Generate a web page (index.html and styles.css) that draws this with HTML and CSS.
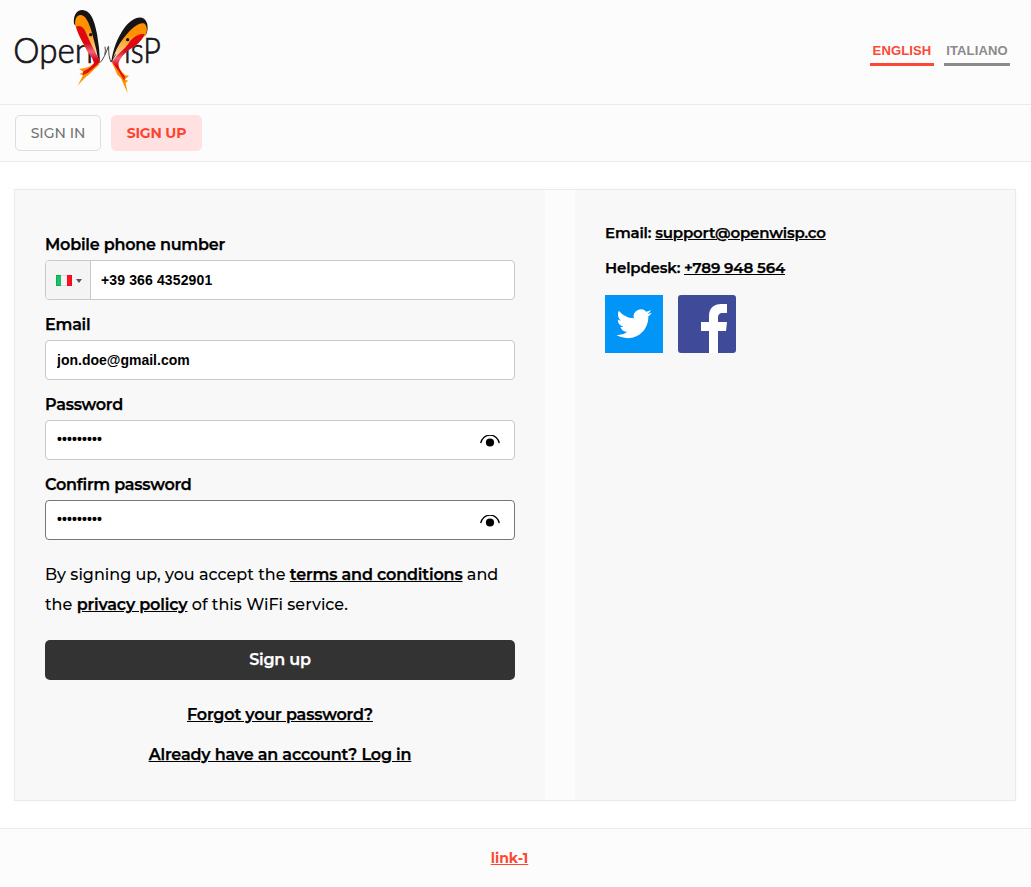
FILE: index.html
```html
<!DOCTYPE html>
<html lang="en">
<head>
<meta charset="utf-8">
<title>OpenWISP - Sign up</title>
<link rel="stylesheet" href="styles.css">
</head>
<body>
<header class="header">
  <a class="logo" href="#">
    <svg class="logo-mark" width="155" height="86" viewBox="36 27 465 258">
      <defs>
        <linearGradient id="wing" x1="0" y1="0" x2="0" y2="1"><stop offset=".3" stop-color="#ff9100"/><stop offset=".75" stop-color="#ffc680"/><stop offset="1" stop-color="#fff"/></linearGradient>
        <linearGradient id="red" x1="0" y1="0" x2="0" y2="1"><stop offset="0" stop-color="#e20a0a"/><stop offset=".35" stop-color="#d9061a"/><stop offset=".52" stop-color="#ed6680"/><stop offset=".68" stop-color="#dc0018"/><stop offset="1" stop-color="#e31912"/></linearGradient>
      </defs>
      <g class="logo-text">
        <text x="40" y="190" textLength="239" lengthAdjust="spacingAndGlyphs">Open</text>
        <text x="372" y="190" textLength="110" lengthAdjust="spacingAndGlyphs">isP</text>
      </g>
      <path d="M222 72C219 48 229 30 247 30C274 31 284 66 291 101Q299 145 300 188L295 184L276 167L232 82Z" fill="#171417"/>
      <path d="M226 78C223 56 231 44 243 45C261 47 272 82 279 110Q290 149 295 181L270 154Z" fill="url(#wing)"/>
      <path d="M228 80Q245 71 256 88L270 124Q279 146 300 184L297 194L266 224Q253 233 233 257L249 226L238 222L251 216L237 206Q264 207 282 190Q279 174 264 157L247 125Q233 99 228 80Z" fill="#ff9100"/>
      <path d="M228 80Q243 73 254 90L269 124Q279 146 300 184L292 194L264 218L248 226L250 214Q268 209 282 190Q279 174 264 157L247 125Q233 99 228 80Z" fill="url(#red)"/>
      <path d="M334 187C338 149 353 111 373 84C390 61 415 45 432 56C446 67 445 92 438 104L355 178Z" fill="#171417"/>
      <path d="M337 184Q345 145 374 110C396 82 420 64 434 71C443 80 442 97 436 106L352 176Z" fill="url(#wing)"/>
      <path d="M434 103C421 98 403 109 391 122Q380 142 353 164L335 186L352 224L363 235L383 280L377 248L385 242L374 239L387 227L376 226Q353 206 355 190Q361 169 385 150Q421 133 434 103Z" fill="#ff9100"/>
      <path d="M434 103C421 98 403 109 391 122Q380 142 353 164L336 186L357 215L373 243L375 230Q353 206 355 190Q361 169 385 150Q421 133 434 103Z" fill="url(#red)"/>
      <circle cx="272" cy="104" r="5" fill="#171417"/>
      <circle cx="383" cy="119" r="5" fill="#171417"/>
      <path d="M300 188Q313 175 325 139M326 139Q325 170 333 186L347 163M315 140Q318 155 314 163" fill="none" stroke="#29262a" stroke-width="2.5"/>
    </svg>
  </a>
  <div class="languages"><button class="lang lang-active">ENGLISH</button><button class="lang">ITALIANO</button></div>
</header>
<nav class="nav"><a class="nav-link" href="#">SIGN IN</a><a class="nav-link nav-active" href="#">SIGN UP</a></nav>
<main class="main">
  <div class="panel">
    <form class="form">
      <label class="label" for="phone">Mobile phone number</label>
      <div class="field">
        <div class="country"><svg width="16" height="11" viewBox="0 0 16 11"><path fill="#10ad49" d="M0 0h5v11H0z"/><path fill="#15c565" d="M1 1h4v9H1z"/><path fill="#ddd" d="M5 0h6v11H5z"/><path fill="#f3f3f3" d="M5 1h6v9H5z"/><path fill="#ed0c20" d="M11 0h5v11h-5z"/><path fill="#ff0d20" d="M11 1h4v9h-4z"/></svg><i class="caret"></i></div>
        <input class="input input-phone" id="phone" value="+39 366 4352901">
      </div>
      <label class="label" for="email">Email</label>
      <div class="field"><input class="input" id="email" value="jon.doe@gmail.com"></div>
      <label class="label" for="password">Password</label>
      <div class="field"><input class="input input-password" id="password" type="password" value="password1"><svg class="eye" width="20" height="14" viewBox="0 0 20 14"><path d="M.7 8.2A9.4 9.4 0 0 1 19.3 8.2" fill="none" stroke="#000" stroke-width="1.3"/><circle cx="10" cy="7.5" r="4.1"/></svg></div>
      <label class="label" for="confirm">Confirm password</label>
      <div class="field field-focus"><input class="input input-password" id="confirm" type="password" value="password1"><svg class="eye" width="20" height="14" viewBox="0 0 20 14"><path d="M.7 8.2A9.4 9.4 0 0 1 19.3 8.2" fill="none" stroke="#000" stroke-width="1.3"/><circle cx="10" cy="7.5" r="4.1"/></svg></div>
      <p class="terms">By signing up, you accept the <a href="#">terms and conditions</a> and<br>the <a href="#">privacy policy</a> of this WiFi service.</p>
      <button class="submit" type="button">Sign up</button>
      <p class="form-link"><a href="#">Forgot your password?</a></p>
      <p class="form-link"><a href="#">Already have an account? Log in</a></p>
    </form>
    <aside class="contact">
      <p class="contact-row">Email: <a href="#">support@openwisp.co</a></p>
      <p class="contact-row">Helpdesk: <a href="#">+789 948 564</a></p>
      <div class="social">
        <a href="#"><svg width="58" height="58" viewBox="0 0 58 58"><path fill="#0095f7" d="M0 0h58v58H0z"/><path transform="translate(11.4 11) scale(1.48)" fill="#fff" d="M23.95 4.57a10 10 0 0 1-2.82.78 5 5 0 0 0 2.16-2.73c-.95.56-2 .96-3.13 1.19a4.92 4.92 0 0 0-8.38 4.48C7.69 8.1 4.07 6.13 1.64 3.16a4.92 4.92 0 0 0 1.52 6.57 4.9 4.9 0 0 1-2.23-.61v.06a4.92 4.92 0 0 0 3.95 4.83 5 5 0 0 1-2.21.08 4.94 4.94 0 0 0 4.6 3.42A9.9 9.9 0 0 1 0 19.54a14 14 0 0 0 7.55 2.21c9.05 0 14-7.5 14-13.98l-.02-.63a10 10 0 0 0 2.42-2.57z"/></svg></a>
        <a href="#"><svg width="58" height="58" viewBox="0 0 58 58"><rect width="58" height="58" rx="3" fill="#3f4b99"/><path fill="#fff" d="M31 58V36h-8v-9h8v-6c0-8 5-12 12-12h6v9h-4c-4 0-5 2-5 5v4h9l-1 9h-8v22z"/></svg></a>
      </div>
    </aside>
  </div>
</main>
<footer class="footer"><a class="footer-link" href="#">link-1</a></footer>
</body>
</html>
```
FILE: styles.css
```css
* { box-sizing: border-box; }
body { margin: 0; background: #fff; color: #000; font: 500 16px/30px Montserrat, Inter, sans-serif; }
a { color: inherit; }
p { margin: 0; }
button, input { font-family: inherit; }
svg { display: block; flex: none; }
.header { height: 105px; padding: 9px 21px 0 12px; display: flex; justify-content: space-between; background: #fcfcfc; border-bottom: 1px solid #ebebeb; }
.logo-mark { overflow: visible; }
.logo-text { font-family: Lato, sans-serif; font-size: 108px; font-weight: 300; fill: #171417; stroke: #171417; stroke-width: 2.2px; }
.languages { display: flex; gap: 10px; height: 57px; align-items: flex-end; }
.lang { width: 66px; height: 30px; padding: 3px 0 0; border: 0; border-bottom: 3px solid #8b8b8b; background: none; color: #8b8b8b; font: 700 13px/24px "Liberation Sans", sans-serif; letter-spacing: .15px; white-space: nowrap; }
.lang-active { width: 64px; color: #fb4935; border-color: #fb4935; }
.nav { height: 57px; padding: 10px 15px; display: flex; gap: 10px; background: #fcfcfc; border-bottom: 1px solid #ebebeb; }
.nav-link { width: 86px; height: 36px; border: 1px solid #ddd; border-radius: 5px; color: #727272; font-size: 14px; line-height: 34px; text-align: center; text-decoration: none; white-space: nowrap; }
.nav-active { width: 91px; background: #ffe1e1; border-color: #ffe1e1; color: #fb4530; font-weight: 700; letter-spacing: -.2px; }
.main { padding: 27px 15px 27px 14px; }
.panel { height: 612px; display: flex; gap: 30px; background: #fcfcfc; border: 1px solid #ebebeb; box-shadow: 0 0 4px #f7f7f7; }
.form { width: 530px; padding: 40px 30px 0; background: #f8f8f8; }
.contact { flex: 1; padding: 28px 30px; background: #f8f8f8; font-size: 15px; font-weight: 600; letter-spacing: -.17px; -webkit-text-stroke: .25px; }
.label { display: block; height: 30px; line-height: 30px; font-weight: 600; letter-spacing: -.22px; -webkit-text-stroke: .25px; white-space: nowrap; }
.field { height: 40px; margin-bottom: 10px; display: flex; align-items: center; border: 1px solid #c9c9c9; border-radius: 4px; background: #fff; overflow: hidden; }
.field-focus { border-color: #777; }
.input { flex: 1; min-width: 0; height: 38px; border: 0; outline: 0; background: none; padding: 0 11px; color: #000; font: 700 14px "Liberation Sans", sans-serif; }
.input-phone { padding-left: 10px; letter-spacing: .13px; }
.input-password { padding-bottom: 2px; letter-spacing: .1px; }
.eye { margin: 3px 14px 0 0; }
.country { width: 45px; height: 38px; display: flex; align-items: center; gap: 4px; padding: 1px 0 0 10px; background: #f4f4f4; border-right: 1px solid #c9c9c9; }
.caret { border: 3px solid transparent; border-top: 4px solid #555; border-bottom: 0; }
.terms { margin-top: 20px; white-space: pre; }
.terms a { font-weight: 600; letter-spacing: -.15px; -webkit-text-stroke: .25px; }
.submit { display: block; width: 100%; height: 40px; margin: 20px 0; padding: 0 0 1px; border: 0; border-radius: 5px; background: #333; color: #fff; font-size: 16px; font-weight: 600; letter-spacing: -.2px; -webkit-text-stroke: .25px; }
.form-link { height: 40px; text-align: center; font-weight: 600; letter-spacing: -.16px; -webkit-text-stroke: .25px; white-space: nowrap; }
.contact-row { height: 35px; white-space: nowrap; }
.social { display: flex; gap: 15px; margin-top: 7px; }
.footer { height: 58px; padding: 14px 12px 0 0; background: #fcfcfc; border-top: 1px solid #ebebeb; text-align: center; }
.footer-link { color: #fb4935; font-size: 14px; font-weight: 700; }
```
